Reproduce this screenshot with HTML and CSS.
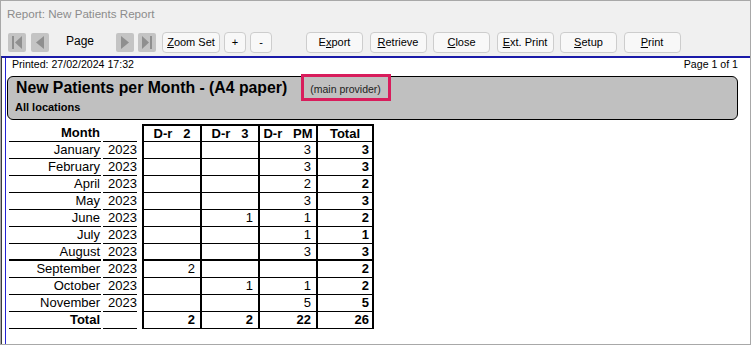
FILE: index.html
```html
<!DOCTYPE html>
<html>
<head>
<meta charset="utf-8">
<title>Report: New Patients Report</title>
<link rel="stylesheet" href="styles.css">
</head>
<body>
<div class="window">
  <div class="titlebar">Report: New Patients Report</div>
  <div class="toolbar">
    <span class="nav first"><svg width="18" height="19" viewBox="0 0 18 19"><rect width="18" height="19" rx="2" fill="#c4c4c4"/><rect x="4" y="3" width="2" height="13" fill="#8f8f8f"/><path d="M14 3 L7 9.5 L14 16Z" fill="#8f8f8f"/></svg></span>
    <span class="nav prev"><svg width="18" height="19" viewBox="0 0 18 19"><rect width="18" height="19" rx="2" fill="#c4c4c4"/><path d="M13 3 L5 9.5 L13 16Z" fill="#8f8f8f"/></svg></span>
    <span class="page-label">Page</span>
    <span class="nav next"><svg width="18" height="19" viewBox="0 0 18 19"><rect width="18" height="19" rx="2" fill="#c4c4c4"/><path d="M5 3 L13 9.5 L5 16Z" fill="#8f8f8f"/></svg></span>
    <span class="nav last"><svg width="18" height="19" viewBox="0 0 18 19"><rect width="18" height="19" rx="2" fill="#c4c4c4"/><path d="M4 3 L11 9.5 L4 16Z" fill="#8f8f8f"/><rect x="12" y="3" width="2" height="13" fill="#8f8f8f"/></svg></span>
    <button class="btn zoom"><u>Z</u>oom Set</button>
    <button class="btn small">+</button>
    <button class="btn small">-</button>
    <button class="btn act first-act">E<u>x</u>port</button>
    <button class="btn act"><u>R</u>etrieve</button>
    <button class="btn act"><u>C</u>lose</button>
    <button class="btn act"><u>E</u>xt. Print</button>
    <button class="btn act"><u>S</u>etup</button>
    <button class="btn act"><u>P</u>rint</button>
  </div>
  <div class="report">
    <div class="page">
      <div class="meta"><span>Printed: 27/02/2024 17:32</span><span>Page 1 of 1</span></div>
      <div class="banner">
        <div class="banner-top">
          <span class="title">New Patients per Month - (A4 paper)</span>
          <span class="provider">(main provider)</span>
        </div>
        <div class="subtitle">All locations</div>
      </div>
      <div class="grid">
        <div class="row hdr">
          <div class="m">Month</div><div class="sp"></div><div class="y"></div><div class="sp"></div>
          <div class="c">D-r   2</div><div class="c">D-r   3</div><div class="c">D-r   PM</div><div class="c t">Total</div>
        </div>
        <div class="row">
          <div class="m">January</div><div class="sp"></div><div class="y">2023</div><div class="sp"></div>
          <div class="c"></div><div class="c"></div><div class="c">3</div><div class="c t">3</div>
        </div>
        <div class="row">
          <div class="m">February</div><div class="sp"></div><div class="y">2023</div><div class="sp"></div>
          <div class="c"></div><div class="c"></div><div class="c">3</div><div class="c t">3</div>
        </div>
        <div class="row">
          <div class="m">April</div><div class="sp"></div><div class="y">2023</div><div class="sp"></div>
          <div class="c"></div><div class="c"></div><div class="c">2</div><div class="c t">2</div>
        </div>
        <div class="row">
          <div class="m">May</div><div class="sp"></div><div class="y">2023</div><div class="sp"></div>
          <div class="c"></div><div class="c"></div><div class="c">3</div><div class="c t">3</div>
        </div>
        <div class="row">
          <div class="m">June</div><div class="sp"></div><div class="y">2023</div><div class="sp"></div>
          <div class="c"></div><div class="c">1</div><div class="c">1</div><div class="c t">2</div>
        </div>
        <div class="row">
          <div class="m">July</div><div class="sp"></div><div class="y">2023</div><div class="sp"></div>
          <div class="c"></div><div class="c"></div><div class="c">1</div><div class="c t">1</div>
        </div>
        <div class="row break">
          <div class="m">August</div><div class="sp"></div><div class="y">2023</div><div class="sp"></div>
          <div class="c"></div><div class="c"></div><div class="c">3</div><div class="c t">3</div>
        </div>
        <div class="row">
          <div class="m">September</div><div class="sp"></div><div class="y">2023</div><div class="sp"></div>
          <div class="c">2</div><div class="c"></div><div class="c"></div><div class="c t">2</div>
        </div>
        <div class="row">
          <div class="m">October</div><div class="sp"></div><div class="y">2023</div><div class="sp"></div>
          <div class="c"></div><div class="c">1</div><div class="c">1</div><div class="c t">2</div>
        </div>
        <div class="row">
          <div class="m">November</div><div class="sp"></div><div class="y">2023</div><div class="sp"></div>
          <div class="c"></div><div class="c"></div><div class="c">5</div><div class="c t">5</div>
        </div>
        <div class="row total">
          <div class="m">Total</div><div class="sp"></div><div class="y"></div><div class="sp"></div>
          <div class="c">2</div><div class="c">2</div><div class="c">22</div><div class="c t">26</div>
        </div>
      </div>
    </div>
  </div>
</div>
</body>
</html>
```

FILE: styles.css
```css
html, body {
  margin: 0;
  padding: 0;
  background: #ffffff;
}

.window {
  width: 751px;
  height: 345px;
  box-sizing: border-box;
  border: 1px solid #a8a8a8;
  background: #f0f0f0;
  display: flex;
  flex-direction: column;
  font-family: "Liberation Sans", Arial, sans-serif;
  color: #000;
}

.titlebar {
  height: 26px;
  line-height: 26px;
  padding-left: 6px;
  font-size: 11.6px;
  color: #8c8c8c;
}

.toolbar {
  height: 29px;
  box-sizing: border-box;
  padding: 5px 0 0 7px;
  display: flex;
  align-items: flex-start;
}

.nav {
  display: block;
  width: 18px;
  height: 19px;
  margin-top: 1px;
}
.nav svg { display: block; }
.nav.prev { margin-left: 5px; }
.nav.next { margin-left: 22px; }
.nav.last { margin-left: 4px; }

.page-label {
  margin-left: 17px;
  width: 28px;
  font-size: 12px;
  line-height: 18px;
}

.btn {
  height: 21px;
  box-sizing: border-box;
  border: 1px solid #cdcdcd;
  border-radius: 4px;
  background: #f8f8f8;
  font-family: "Liberation Sans", Arial, sans-serif;
  font-size: 11px;
  line-height: 19px;
  color: #000;
  padding: 0;
  margin: 0;
  text-align: center;
}
.btn u { text-decoration: underline; text-underline-offset: 1px; }
.btn.zoom { width: 58px; margin-left: 6px; }
.btn.small { width: 22px; margin-left: 4px; }
.btn.act { width: 57px; margin-left: 6.5px; }
.btn.first-act { margin-left: 34px; }

.report {
  flex: 1;
  display: flex;
  background: #fff;
  border-top: 2px solid #1a1aa8;
  border-left: 1px solid #3c3c3c;
}

.page {
  flex: 1;
  margin-left: 3px;
  border-left: 1px solid #2424d4;
  padding: 0 12px 0 1px;
}

.meta {
  display: flex;
  justify-content: space-between;
  font-size: 10.6px;
  line-height: 13px;
  padding-left: 5px;
}

.banner {
  margin-top: 5px;
  height: 44px;
  box-sizing: border-box;
  border: 1px solid #000;
  border-radius: 6px;
  background: #c0c0c0;
  padding: 2px 0 0 8px;
}

.banner-top {
  display: flex;
  align-items: baseline;
}

.title {
  font-weight: bold;
  font-size: 15.8px;
  line-height: 17px;
}

.provider {
  position: relative;
  margin-left: 23px;
  font-size: 10.5px;
  line-height: 12px;
  color: #222;
}
.provider::after {
  content: "";
  position: absolute;
  left: -9px;
  right: -10px;
  top: -9px;
  bottom: -6px;
  border: 3px solid #d81d5c;
}

.subtitle {
  font-weight: bold;
  font-size: 11px;
  line-height: 13px;
  margin-top: 5px;
  margin-left: -1px;
}

.grid {
  margin: 4px 0 0 2px;
  font-size: 13px;
}

.row {
  display: grid;
  grid-template-columns: 92px 2px 34px 5px 58px 58px 58px 58px;
  height: 17px;
  line-height: 16px;
}

.row > div {
  box-sizing: border-box;
  white-space: pre;
  overflow: hidden;
}

.m, .y, .c {
  border-bottom: 1px solid #000;
  text-align: right;
}
.m { padding-right: 1px; }

.c {
  border-left: 2px solid #000;
  padding-right: 5px;
}
.c.t {
  border-right: 2px solid #000;
  padding-right: 3px;
  font-weight: bold;
}

.hdr {
  height: 18px;
  font-weight: bold;
}
.hdr .m, .hdr .y { padding-top: 1px; }
.hdr .c {
  border-top: 2px solid #000;
  text-align: center;
  padding-right: 0;
  line-height: 15px;
}

.break .m, .break .y, .break .c {
  border-bottom-width: 2px;
  line-height: 15px;
}

.total { font-weight: bold; }
```
